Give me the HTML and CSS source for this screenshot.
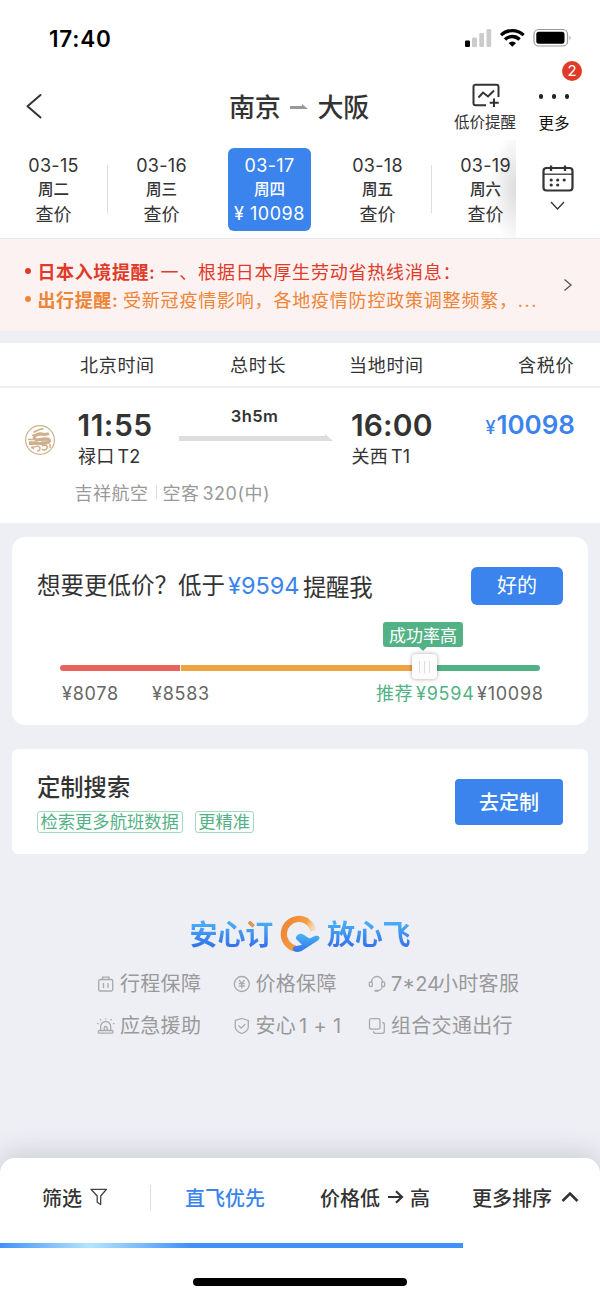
FILE: index.html
```html
<!DOCTYPE html>
<html lang="zh-CN">
<head>
<meta charset="utf-8">
<title>南京 - 大阪</title>
<link rel="stylesheet" href="styles.css">
</head>
<body>
<div class="app">
  <div class="status">
    <span class="clock">17:40</span>
    <svg class="status-icons" width="110" height="22" viewBox="0 0 110 22">
      <rect x="1" y="12.500" width="5" height="6.500" rx="1.200" fill="#000"/>
      <rect x="8" y="9.500" width="5" height="9.500" rx="1.200" fill="#ccc"/>
      <rect x="15.300" y="5" width="4.700" height="14" rx="1.200" fill="#ccc"/>
      <rect x="22.500" y="1" width="4.700" height="18" rx="1.200" fill="#ccc"/>
      <g fill="none" stroke="#000" stroke-width="3.300">
        <path d="M37 7.100a16.500 16.500 0 0 1 22.600 0"/>
        <path d="M41 11.500a10.400 10.400 0 0 1 14.600 0"/>
      </g>
      <path d="M48.300 18.800l-3.700-3.700a5.300 5.300 0 0 1 7.400 0z"/>
      <rect x="70" y="1.500" width="33.500" height="16.500" rx="4.600" fill="none" stroke="#999" stroke-width="1.200"/>
      <rect x="72.300" y="3.800" width="28.200" height="12" rx="2.500"/>
      <path d="M105.500 7.400q2.300 2.300 0 4.700z" fill="#999"/>
    </svg>
  </div>

  <header class="nav">
    <svg class="back" width="20" height="28" viewBox="0 0 20 28"><path d="M16.500 3L3.500 14.300 16.500 25.500" fill="none" stroke="#333" stroke-width="2" stroke-linecap="round" stroke-linejoin="round"/></svg>
    <h1 class="route"><span>南京</span><svg width="18" height="6" viewBox="0 0 18 6"><path d="M0 2h12V0l6 5H0z" fill="#999"/></svg><span>大阪</span></h1>
    <div class="alert-btn">
      <svg width="30" height="26" viewBox="0 0 30 26" fill="none" stroke="#333" stroke-width="2">
        <path d="M16 22.200H5.500a2 2 0 0 1-2-2V3.700a2 2 0 0 1 2-2h21a2 2 0 0 1 2 2V14" stroke-linejoin="round"/>
        <path d="M8.500 14.500l4.500-5 5 4 6-6M24 15.500v8.500M19.700 19.700h9"/>
      </svg>
      <span>低价提醒</span>
    </div>
    <div class="more-btn"><i></i><i></i><i></i><span>更多</span><b class="badge">2</b></div>
  </header>

  <section class="dates">
    <div class="strip">
      <div class="day rule"><span class="md">03-15</span><b>周二</b><span class="chk">查价</span></div>
      <div class="day"><span class="md">03-16</span><b>周三</b><span class="chk">查价</span></div>
      <div class="day"><div class="sel"><span class="md">03-17</span><b>周四</b><span class="amt">¥ 10098</span></div></div>
      <div class="day rule"><span class="md">03-18</span><b>周五</b><span class="chk">查价</span></div>
      <div class="day"><span class="md">03-19</span><b>周六</b><span class="chk">查价</span></div>
    </div>
    <div class="calendar">
      <svg width="34" height="50" viewBox="0 0 34 50" fill="none" stroke="#333">
        <rect x="2.500" y="5" width="29" height="22.500" rx="3" stroke-width="2.200"/>
        <path d="M2.500 11.200h29" stroke-width="1.300"/>
        <path d="M10 2.500v5.500M24 2.500v5.500" stroke-width="2.300"/>
        <g stroke-width="3.200" stroke-linecap="round"><path d="M10.200 17h.01M16.700 17h.01M23.200 17h.01M10.200 22h.01M16.700 22h.01"/></g>
        <path d="M10 39l6.500 7 6.500-7" stroke-width="1.300"/>
      </svg>
    </div>
  </section>

  <section class="notice">
    <div class="lines">
      <p class="red"><i></i><b>日本入境提醒:</b><span>一、根据日本厚生劳动省热线消息：</span></p>
      <p class="orange"><i></i><b>出行提醒:</b><span>受新冠疫情影响，各地疫情防控政策调整频繁，<em>...</em></span></p>
    </div>
    <svg width="10" height="14" viewBox="0 0 10 14"><path d="M1.500 1.500L8 7l-6.500 5.500" fill="none" stroke="#555" stroke-width="1.300"/></svg>
  </section>

  <div class="thead"><span>北京时间</span><span>总时长</span><span>当地时间</span><span>含税价</span></div>

  <section class="flight">
    <svg class="carrier" width="32" height="32" viewBox="0 0 32 32" fill="none" stroke="#cfb08c">
      <circle cx="16" cy="16" r="14.400" stroke-width="1.200"/>
      <path d="M9.500 8.500c3-1.500 6.500-4 10-3.500M8 11c3 1.500 5-2 8-2s4 2.500 7 1.500" stroke-width="1.700"/>
      <path d="M25 9.500c-5 2.500-10-1.500-14 2.500-2.500 3 1 4.500 5 3.500 4-.8 9-1.500 9.500 1s-5 3-9 3H5" stroke-width="3"/>
      <path d="M4 15.500h5M5 18h9M17 17h7M8 22.500c2 2 5-1.500 7 0s1 5-2 4.500M18 22c3-1.500 6-.5 5 2s-4 2.500-5 .8M10 25l-3-2M26 20v4" stroke-width="1.500"/>
    </svg>
    <div class="dep"><strong>11:55</strong><span>禄口<i>T2</i></span></div>
    <div class="dur"><b>3h5m</b><svg width="154" height="8" viewBox="0 0 154 8"><path d="M0 2h146V0l8 7H0z" fill="#ddd"/></svg></div>
    <div class="arr"><strong>16:00</strong><span>关西<i>T1</i></span></div>
    <div class="price"><small>¥</small>10098</div>
    <div class="meta"><span>吉祥航空</span><i></i><span>空客</span><span class="model">320(中)</span></div>
  </section>

  <section class="card remind">
    <div class="ask"><span class="q">想要更低价？低于</span><span class="target">¥9594</span><span class="tail">提醒我</span><button class="ok">好的</button></div>
    <div class="slider">
      <span class="bar low"></span><span class="bar mid"></span><span class="bar high"></span>
      <span class="tip">成功率高</span>
      <span class="knob"><i></i><i></i><i></i></span>
    </div>
    <div class="marks"><span>¥8078</span><span>¥8583</span><span class="rec cn">推荐</span><span class="rec">¥9594</span><span>¥10098</span></div>
  </section>

  <section class="card custom">
    <div>
      <h2>定制搜索</h2>
      <div class="tags"><span>检索更多航班数据</span><span>更精准</span></div>
    </div>
    <button class="go">去定制</button>
  </section>

  <section class="promise">
    <div class="brand">
      <span>安心<em>订</em></span>
      <svg width="42" height="38" viewBox="0 0 42 38">
        <defs>
          <linearGradient id="ring" x1="0.100" y1="0.300" x2="1" y2="0.700"><stop offset="0" stop-color="#f08a36"/><stop offset=".55" stop-color="#f4a045"/><stop offset="1" stop-color="#f8dca8" stop-opacity=".2"/></linearGradient>
          <linearGradient id="plane" x1="0" y1="0" x2="0" y2="1"><stop offset="0" stop-color="#48b5f4"/><stop offset="1" stop-color="#3672ea"/></linearGradient>
        </defs>
        <path d="M16.500 33.600A15 15 0 1 1 34.500 16" fill="none" stroke="url(#ring)" stroke-width="6.200"/>
        <path d="M18 20.500q3-3 7-.5l5.500 3.500 6-2.700q4-.8 4 2.200-.2 2-3.500 3.700L22.500 36q-6 2.500-8.500-1-1-3 2-3.700l7-1.600-5.500-5.200q-1.500-2 .5-4z" fill="url(#plane)"/>
      </svg>
      <span>放心飞</span>
    </div>
    <ul class="features">
      <li><svg viewBox="0 0 18 18"><rect x="1.700" y="4.500" width="14" height="11.500" rx="1.500"/><path d="M5.500 4.500v-2.300h6.500v2.300M6.500 8v5M11 8v5"/></svg>行程保障</li>
      <li><svg viewBox="0 0 18 18"><circle cx="8.800" cy="9" r="7.500"/><path d="M6 5l2.800 3.500L11.600 5M5.800 8.700h6M5.800 11h6M8.800 8.500V13.500"/></svg>价格保障</li>
      <li><svg viewBox="0 0 18 18"><path d="M3.500 7a5.500 5.500 0 0 1 11 0M14.500 11c-.5 3-2.500 4.500-5 4.700"/><rect x="1.300" y="7" width="3" height="4.500" rx="1"/><rect x="13.700" y="7" width="3" height="4.500" rx="1"/><path d="M6.500 15.800h4" stroke-width="2"/></svg><span class="n24">7*24</span>小时客服</li>
      <li><svg viewBox="0 0 18 18"><path d="M3.700 13.500V9.500a5 5 0 0 1 10 0v4M7.200 13.500v-2.500a1.500 1.500 0 0 1 3 0v2.500M4 3.500L3 2M13.500 3.500l1-1.500M1.500 7L0 6.200M16 7l1.500-.8M8.700 1.500v1"/><rect x="1.300" y="13.500" width="14.700" height="2.700" rx="1"/></svg>应急援助</li>
      <li><svg viewBox="0 0 18 18"><path d="M8.800 1.500l6.500 2v6.500c0 3-2.500 5-6.500 6.500-4-1.500-6.500-3.500-6.500-6.500V3.500zM5.500 8.500l2.700 2.700 4-4"/></svg>安心<span class="plus">1 + 1</span></li>
      <li><svg viewBox="0 0 18 18"><rect x="1.500" y="1.700" width="10.500" height="10.500" rx="1.800"/><path d="M14.300 5.500a2 2 0 0 1 2 2v6.800a2 2 0 0 1-2 2H7.500a2 2 0 0 1-2-2"/></svg>组合交通出行</li>
    </ul>
  </section>

  <footer class="sortbar">
    <div class="opts">
      <span class="o1">筛选<svg width="18" height="20" viewBox="0 0 18 20"><path d="M1 2.300h15.500L10.700 9v8.500l-3.500-2.300V9z" fill="none" stroke="#444" stroke-width="1.300" stroke-linejoin="round"/></svg></span>
      <span class="o2">直飞优先</span>
      <span class="o3">价格低<svg width="16" height="14" viewBox="0 0 16 14"><path d="M0 7h14M8 1.200L14 7l-6 5.800" fill="none" stroke="#333" stroke-width="2.200"/></svg>高</span>
      <span class="o4">更多排序<svg width="18" height="12" viewBox="0 0 18 12"><path d="M1.500 10L9 2.500l7.500 7.500" fill="none" stroke="#333" stroke-width="2.600"/></svg></span>
    </div>
    <div class="progress"></div>
    <div class="home"></div>
  </footer>
</div>
</body>
</html>
```
FILE: styles.css
```css
* { box-sizing: border-box; margin: 0; padding: 0; }
body { background: #eeeff5; font-family: Inter, "Noto Sans CJK SC", sans-serif; color: #333; }
i, em { font-style: normal; }
svg { display: block; flex: none; }
ul { list-style: none; }
button { border: 0; background: #3b84ed; color: #fff; font-family: inherit; }
.app { width: 600px; height: 1298px; overflow: hidden; display: flex; flex-direction: column; white-space: nowrap; }

.status { height: 76px; flex: none; background: #fff; display: flex; justify-content: space-between; padding: 26px 26px 0 49px; }
.clock { font-size: 22.500px; font-weight: 600; line-height: 25px; color: #000; letter-spacing: .8px; }
.status-icons { margin-top: 2px; }

.nav { height: 64px; flex: none; background: #fff; display: flex; }
.back { margin: 16px 0 0 24px; }
.route { display: flex; height: 38px; width: 140px; margin: 12px 0 0 185px; font-size: 26px; font-weight: 500; line-height: 42px; justify-content: space-between; align-items: center; letter-spacing: -.3px; }
.route span { height: 40px; }
.alert-btn { margin: 7px 0 0 84px; width: 64px; display: flex; flex-direction: column; align-items: center; font-size: 15.500px; line-height: 20px; }
.alert-btn span { margin-top: 4px; }
.more-btn { position: relative; margin: 18px 0 0 19px; width: 36px; height: 40px; display: flex; flex-wrap: wrap; align-content: flex-start; justify-content: center; column-gap: 8.500px; color: #111; font-size: 15.500px; line-height: 20px; }
.more-btn i { width: 4.600px; height: 4.600px; border-radius: 50%; background: #222; }
.more-btn span { width: 36px; text-align: center; margin-top: 15px; font-weight: 400; }
.badge { position: absolute; right: -10px; top: -33px; width: 20px; height: 20px; border-radius: 50%; background: #e03a28; color: #fff; font-size: 15px; font-weight: 400; text-align: center; }

.dates { height: 98px; flex: none; background: #fff; display: flex; }
.strip { width: 516px; display: flex; overflow: hidden; background: radial-gradient(ellipse 26px 58px at 100% 50%, #dcdcdc, #fff); }
.day { width: 108px; flex: none; height: 98px; padding-top: 14px; display: flex; flex-direction: column; align-items: center; }
.day:first-child { margin-left: -.5px; }
.day span, .day b { display: block; }
.md { font-size: 18px; line-height: 24px; letter-spacing: .3px; }
.day b { font-size: 15.500px; line-height: 23px; font-weight: 500; }
.chk { font-size: 18px; line-height: 27px; }
.amt { font-size: 18px; line-height: 26px; letter-spacing: .5px; }
.rule { background: linear-gradient(#ddd, #ddd) 107px 25px / 1px 48px no-repeat; }
.sel { width: 83px; height: 83px; margin-top: -6px; padding-top: 6px; border-radius: 6px; background: #3b84ed; color: #fff; text-align: center; }
.calendar { padding: 23px 0 0 25px; }

.notice { height: 93px; flex: none; background: #fdf2f2; border-top: 1px solid #e8e8ea; display: flex; align-items: center; padding-right: 27px; justify-content: space-between; }
.lines { padding-left: 24.500px; }
.lines p { height: 28px; display: flex; align-items: center; font-size: 18px; letter-spacing: .8px; }
.lines i { width: 6px; height: 6px; border-radius: 50%; background: currentColor; margin-right: 7px; }
.lines b { font-weight: 600; letter-spacing: .6px; }
.lines em { letter-spacing: 1.500px; }
.red b { width: 123px; }
.orange b { width: 85.500px; }
.red { color: #e03a28; }
.orange { color: #ee8435; }

.thead { margin-top: 12px; height: 45px; flex: none; background: #fff; border-bottom: 2px solid #eeeff5; display: grid; grid-template-columns: 150px 119px 169px 82px; padding: 1px 0 0 80px; font-size: 18px; line-height: 44px; letter-spacing: .7px; }

.flight { height: 135px; flex: none; background: #fff; display: grid; grid-template: 94px 41px / 54px 101px 172.500px 120px 128px; padding-left: 24px; }
.carrier { margin-top: 36px; }
.dep, .arr { padding-top: 20px; }
.flight strong { display: block; font-size: 30px; line-height: 35px; font-weight: 600; letter-spacing: .1px; margin-left: -.5px; }
.dep strong { letter-spacing: .5px; }
.dep span, .arr span { display: block; font-size: 18px; line-height: 28px; letter-spacing: .2px; }
.dep i, .arr i { margin-left: 3px; }
.dur { display: flex; flex-direction: column; margin-left: -.5px; }
.dur b { width: 152px; text-align: center; margin-top: 17px; font-size: 16.500px; font-weight: 600; line-height: 22px; letter-spacing: .4px; }
.dur svg { margin-top: 7px; }
.price { padding-top: 20px; color: #3b84ed; font-size: 26px; line-height: 33px; font-weight: 600; text-align: right; width: 103.500px; }
.price small { font-size: 18px; font-weight: 500; margin-right: 1px; }
.meta { grid-column: 2 / 6; display: flex; align-items: center; height: 22px; margin: -1px 0 0 -3.500px; color: #999; font-size: 18px; letter-spacing: .5px; }
.meta i { width: 1px; height: 14px; background: #ddd; margin: 0 6px 0 7px; }
.model { margin-left: 3px; }

.card { background: #fff; margin: 0 12px; flex: none; }
.remind { margin-top: 14px; height: 188px; border-radius: 13px; }
.ask { display: grid; grid-template-columns: 191px 75px 168px 92px; padding: 30px 0 0 25px; height: 68px; line-height: 38px; font-size: 23.500px; }
.target { color: #3b84ed; }
.tail { margin-top: 2px; letter-spacing: -.4px; }
.ok { height: 38px; border-radius: 6px; font-size: 20px; line-height: 38px; }
.slider { position: relative; display: flex; margin: 60px 48px 0; height: 6px; }
.bar { height: 6px; }
.low { width: 119.500px; background: #eb615b; border-radius: 3px 0 0 3px; margin-right: 1.500px; }
.mid { width: 243px; background: #f1a340; }
.high { flex: 1; background: #52b285; border-radius: 0 3px 3px 0; }
.tip { position: absolute; left: 323px; top: -43px; width: 80px; height: 25px; border-radius: 3px; background: #52b285; color: #fff; font-size: 17px; line-height: 28px; text-align: center; }
.tip::after { content: ""; position: absolute; left: 35px; top: 24px; border: 5px solid transparent; border-top-color: #52b285; border-bottom: 0; }
.knob { position: absolute; left: 352px; top: -11px; width: 25px; height: 25px; border-radius: 4px; background: #fcfcfc; box-shadow: 0 0 4px rgba(0,0,0,.35); display: flex; justify-content: center; align-items: center; gap: 4px; }
.knob i { width: 1px; height: 12px; background: #ddd; }
.marks { display: grid; grid-template-columns: 90px 224px 40px 61px 70px; padding: 11px 0 0 50px; font-size: 18px; line-height: 24px; letter-spacing: .75px; color: #666; }
.marks .rec { color: #52b285; }
.marks .cn { letter-spacing: .4px; }

.custom { margin-top: 24px; height: 105px; border-radius: 6px; display: flex; justify-content: space-between; padding: 23px 25px 0; }
.custom h2 { font-size: 23.300px; font-weight: 500; line-height: 32px; }
.tags { display: flex; gap: 12px; margin-top: 7px; }
.tags span { height: 22px; border: 1px solid #a5d8c0; border-radius: 3px; padding: 0 3px 0 2.500px; color: #52b285; font-size: 17.300px; line-height: 20px; }
.go { width: 108px; height: 46px; margin-top: 7px; padding-bottom: 1px; border-radius: 4px; font-size: 20px; font-weight: 500; }

.promise { height: 304px; flex: none; padding-top: 59px; }
.brand { display: flex; height: 42px; justify-content: center; align-items: center; gap: 6px; font-size: 28px; line-height: 42px; font-weight: 700; }
.brand span { margin-top: 2px; background: linear-gradient(#48a9f5 25%, #3470eb 80%); -webkit-background-clip: text; background-clip: text; color: transparent; letter-spacing: -.2px; }
.brand em { background: radial-gradient(circle at 5px 6px, #f19237 4.500px, transparent 5px); -webkit-background-clip: text; background-clip: text; }
.features { display: grid; grid-template: 42px 42px / 135.500px 135.500px 160px; padding: 8px 0 0 97px; color: #999; font-size: 20px; letter-spacing: .3px; line-height: 26px; }
.features li { display: flex; align-items: center; }
.features svg { width: 18px; height: 18px; margin-right: 5px; fill: none; stroke: #aaa; stroke-width: 1.300; }
.n24 { width: 47px; letter-spacing: 0; }
.plus { margin-left: 3px; }

.sortbar { height: 140px; flex: none; background: #fff; border-radius: 15px 15px 0 0; box-shadow: 0 -3px 28px rgba(60,65,80,.22); }
.opts { height: 84px; padding: 0 0 6px 42px; display: grid; grid-template-columns: 143px 135px 152px 128px; font-size: 20px; font-weight: 500; }
.opts span { display: flex; align-items: center; }
.o1 { background: linear-gradient(#ddd, #ddd) 108px 27px / 1px 25px no-repeat; }
.o1 svg { margin-left: 8px; }
.o2 { color: #3b84ed; }
.o3 svg { margin: 0 6px 0 8px; }
.o4 svg { margin-left: 9px; }
.progress { width: 463px; height: 5px; margin-top: 1px; background: linear-gradient(90deg, #4192f7, #b5e5ff 90px, #4192f7 190px); }
.home { width: 214px; height: 8px; margin: 30px auto 0; background: #000; border-radius: 4px; }
```
